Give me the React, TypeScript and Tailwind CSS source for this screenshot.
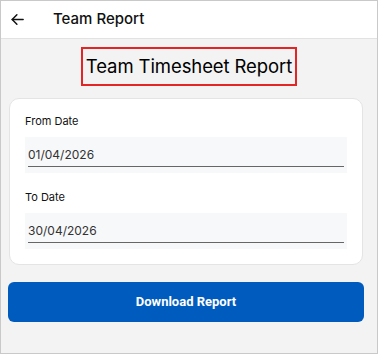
import React from "react";

export default function App() {
  return (
    <div className="w-[378px] h-[354px] border border-[#c9c9c9] bg-[#f3f3f3] flex flex-col overflow-hidden" style={{ fontFamily: "Inter, 'Noto Sans', sans-serif" }}>
      <div className="h-[38px] shrink-0 bg-white border-b border-[#e2e2e2] flex items-center">
        <svg className="ml-[9px]" width="15" height="15" viewBox="0 0 24 24" fill="none" stroke="#111" strokeWidth="2.4" strokeLinecap="round" strokeLinejoin="round">
          <path d="M21 12H3.5" />
          <path d="M11 4.5L3.5 12l7.5 7.5" />
        </svg>
        <span className="ml-[28px] text-[15px] font-medium text-[#111]">Team Report</span>
      </div>
      <div className="flex justify-center mt-[8px]">
        <div className="w-[216px] h-[39px] border-2 border-[#e32525] flex items-center justify-center">
          <span className="text-[18.5px] text-black tracking-[-0.1px]">Team Timesheet Report</span>
        </div>
      </div>
      <div className="mx-[8px] mt-[12px] w-[354px] h-[167px] shrink-0 bg-white border border-[#e4e4e4] rounded-[10px] px-[15px] pt-[14px]">
        <div className="text-[11px] text-[#111] h-[16px] leading-[16px]">From Date</div>
        <div className="mt-[8px] h-[36px] bg-[#f7f8fa] px-[3px] pt-[10px]">
          <div className="text-[12px] text-[#333] leading-[16px] h-[20px] border-b-[1.5px] border-[#666]">01/04/2026</div>
        </div>
        <div className="mt-[16px] text-[11px] text-[#111] h-[16px] leading-[16px]">To Date</div>
        <div className="mt-[8px] h-[36px] bg-[#f7f8fa] px-[3px] pt-[10px]">
          <div className="text-[12px] text-[#333] leading-[16px] h-[20px] border-b-[1.5px] border-[#666]">30/04/2026</div>
        </div>
      </div>
      <button className="mx-[7px] mt-[17px] w-[356px] h-[40px] shrink-0 bg-[#005bbf] rounded-[6px] text-white text-[13px] font-bold" style={{ fontFamily: "Roboto, sans-serif" }}>
        Download Report
      </button>
    </div>
  );
}
